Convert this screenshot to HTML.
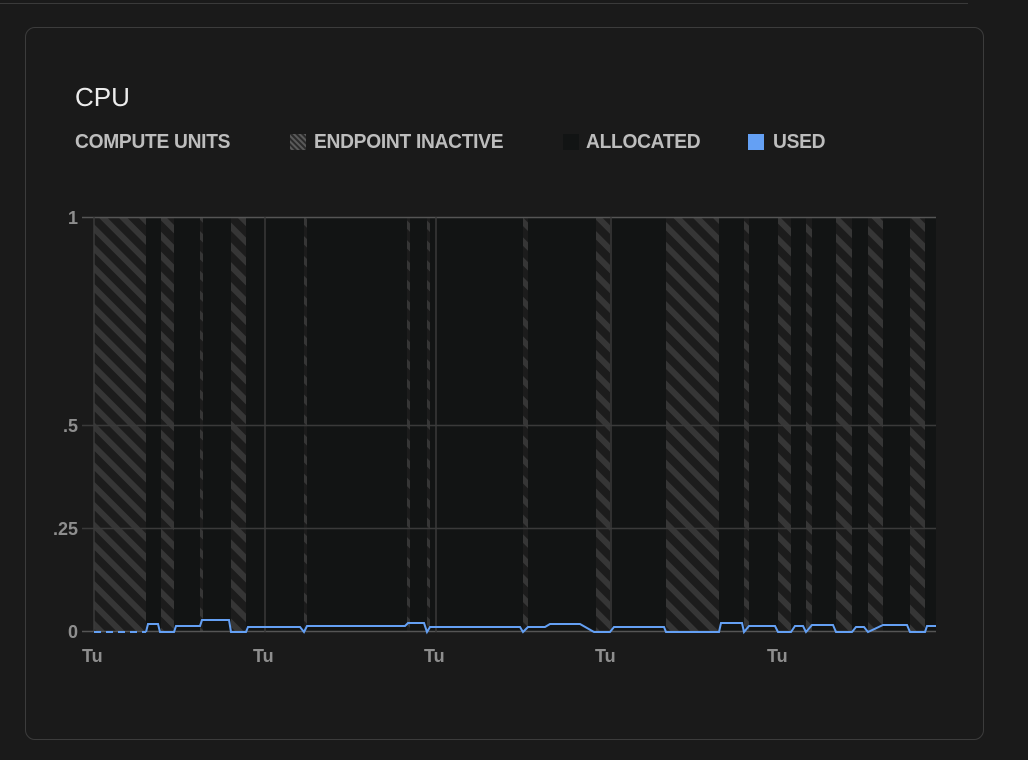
<!DOCTYPE html>
<html><head><meta charset="utf-8"><style>
html,body{margin:0;padding:0;background:#1a1a1a;width:1028px;height:760px;overflow:hidden;font-family:"Liberation Sans",sans-serif}
.top{position:absolute;left:0;top:0;width:968px;height:3px;border-bottom:1px solid #3a3a3a}
.card{position:absolute;left:25px;top:27px;width:959px;height:713px;border:1px solid #3c3c3c;border-radius:10px;box-sizing:border-box}
.t{position:absolute;left:75px;top:82px;font-size:26px;color:#ececec}
.lg{position:absolute;top:131px;font-size:20px;color:#bdbdbd;font-weight:bold;letter-spacing:-0.3px;transform:scaleX(0.96);transform-origin:left}
svg{position:absolute;left:0;top:0}
</style></head><body>
<div class="top"></div>
<div class="card"></div>
<div class="t">CPU</div>
<div class="lg" style="left:75px">COMPUTE UNITS</div>
<svg width="1028" height="760">
<defs>
<pattern id="h" width="14" height="14" patternUnits="userSpaceOnUse" patternTransform="rotate(-45)">
<rect width="14" height="14" fill="#1c1c1c"/><rect width="6" height="14" fill="#363636"/>
</pattern>
<pattern id="hs" width="4" height="4" patternUnits="userSpaceOnUse" patternTransform="rotate(-45)">
<rect width="4" height="4" fill="#2a2a2a"/><rect width="2" height="4" fill="#5a5a5a"/>
</pattern>
</defs>
<rect x="290" y="134" width="16" height="16" fill="url(#hs)"/>
<rect x="563" y="134" width="16" height="16" fill="#121414"/>
<rect x="748" y="134" width="16" height="16" fill="#64a0f4"/>
<rect x="94" y="217" width="842" height="415" fill="#121414"/>
<g fill="url(#h)">
<rect x="94" y="217" width="52" height="415"/>
<rect x="161" y="217" width="13" height="415"/>
<rect x="200" y="217" width="3" height="415"/>
<rect x="231" y="217" width="15" height="415"/>
<rect x="304" y="217" width="3" height="415"/>
<rect x="407" y="217" width="3" height="415"/>
<rect x="427" y="217" width="3" height="415"/>
<rect x="523" y="217" width="5" height="415"/>
<rect x="596" y="217" width="14" height="415"/>
<rect x="666" y="217" width="53" height="415"/>
<rect x="744" y="217" width="5" height="415"/>
<rect x="778" y="217" width="13" height="415"/>
<rect x="806" y="217" width="6" height="415"/>
<rect x="836" y="217" width="16" height="415"/>
<rect x="868" y="217" width="15" height="415"/>
<rect x="910" y="217" width="15" height="415"/>
</g>
<g stroke="#3a3a3a" stroke-width="1.5">
<line x1="82" y1="217.5" x2="936" y2="217.5" stroke="#555"/>
<line x1="82" y1="425.5" x2="936" y2="425.5"/>
<line x1="82" y1="528.5" x2="936" y2="528.5"/>
<line x1="82" y1="631.5" x2="936" y2="631.5" stroke="#555"/>
<line x1="94" y1="217" x2="94" y2="632"/>
<line x1="265" y1="217" x2="265" y2="632"/>
<line x1="436" y1="217" x2="436" y2="632"/>
<line x1="611" y1="217" x2="611" y2="632"/>
</g>
<path d="M94 632H146" stroke="#64a0f4" stroke-width="2" stroke-dasharray="7 5" fill="none"/>
<path d="M146 632L148 624H158L160 632H174L176 626H200L202 620H229L231 632H246L248 627H300L304 632L307 626H405L408 623H424L427 632L430 627H520L523 632L528 627H545L550 624H580L594 632H610L614 627H664L666 632H719L721 623H742L744 632L749 626H775L778 632H791L795 626H803L806 632L812 625H833L836 632H852L856 627H864L868 632L883 625H907L910 632H925L927 626H936" stroke="#64a0f4" stroke-width="2" fill="none"/>
<g fill="#8e8e8e" font-family="Liberation Sans, sans-serif" font-size="18" font-weight="bold">
<text x="78" y="224" text-anchor="end">1</text>
<text x="78" y="432" text-anchor="end">.5</text>
<text x="78" y="535" text-anchor="end">.25</text>
<text x="78" y="638" text-anchor="end">0</text>
<text x="82" y="662">Tu</text>
<text x="253" y="662">Tu</text>
<text x="424" y="662">Tu</text>
<text x="595" y="662">Tu</text>
<text x="767" y="662">Tu</text>
</g>
</svg>
<div class="lg" style="left:314px">ENDPOINT INACTIVE</div>
<div class="lg" style="left:586px">ALLOCATED</div>
<div class="lg" style="left:773px">USED</div>
</body></html>
